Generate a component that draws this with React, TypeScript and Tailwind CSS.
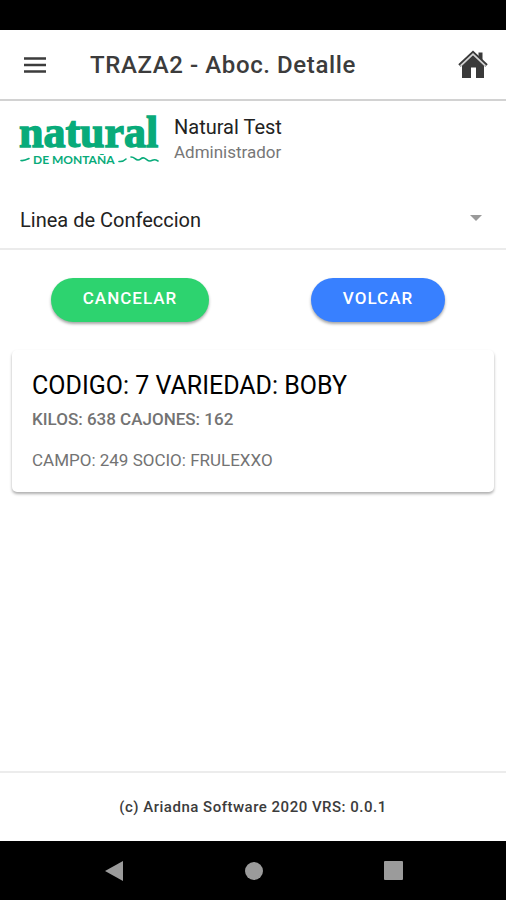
function MenuIcon() {
  return (
    <svg viewBox="0 0 24 20" className="h-5 w-6" fill="none" stroke="#3c3c3c" strokeWidth="2.6" aria-hidden="true">
      <path d="M1 3.5h22M1 10h22M1 16.5h22" />
    </svg>
  );
}

function HomeIcon() {
  return (
    <svg viewBox="0 0 30 30" className="size-[30px]" aria-hidden="true">
      <path d="M20.500 2.500h4v9l-4-4z" fill="#3a3a3a" />
      <path d="M4 15.500 15 5l11 10.500V28h-8V17.500h-5V28H4z" fill="#3a3a3a" />
      <path d="M1.500 15.500 15 3l13.500 12.500" fill="none" stroke="#3a3a3a" strokeWidth="3.600" />
      <path d="M2.500 15.900 15 4.200l12.500 11.700" fill="none" stroke="#d4d4d4" strokeWidth="1.700" />
    </svg>
  );
}

function Logo() {
  return (
    <svg viewBox="0 -8 144 66" className="h-[66px] w-36 shrink-0" fill="#08ab7a" role="img" aria-label="Natural de Montaña">
      <text x="1" y="36" fontFamily="'Liberation Serif', serif" fontWeight="700" fontSize="44" stroke="#08ab7a" strokeWidth="1.4">
        natural
      </text>
      <text x="15" y="53" fontFamily="Lato, sans-serif" fontWeight="700" fontSize="12">
        DE MONTAÑA
      </text>
      <g fill="none" stroke="#08ab7a" strokeWidth="1.600" strokeLinecap="round">
        <path d="M3 49.500q3 .5 8-2" />
        <path d="M101 50.500q4 .5 7-2.500" />
        <path d="M113 46c4 0 4 3 7 3s3-3 6-2 3 3 6 3 3-3 8 0" />
      </g>
    </svg>
  );
}

export default function App() {
  return (
    <div className="flex min-h-screen flex-col bg-white font-['Roboto',sans-serif] text-[#222]">
      <div className="h-[30px] bg-black" />
      <header className="flex h-[71px] items-center border-b-2 border-[#d2d2d2] pr-[18px] pl-[23px]">
        <button type="button" aria-label="Menú">
          <MenuIcon />
        </button>
        <h1 className="ml-[43px] flex-1 text-2xl font-medium tracking-wide text-[#3c3c3c]">TRAZA2 - Aboc. Detalle</h1>
        <a href="#inicio" aria-label="Inicio">
          <HomeIcon />
        </a>
      </header>

      <main className="flex-1">
        <section className="flex items-start gap-3 pt-[2px] pr-5 pl-[18px]">
          <Logo />
          <div className="pt-3">
            <p className="text-xl leading-6 text-[#222]">Natural Test</p>
            <p className="text-[17px] leading-[26px] text-[#777]">Administrador</p>
          </div>
        </section>

        <div className="relative mt-[22px] border-b-2 border-[#ebebeb]">
          <select
            aria-label="Linea"
            className="h-[57px] w-full appearance-none bg-transparent pr-12 pl-5 text-xl text-[#222]"
          >
            <option>Linea de Confeccion</option>
          </select>
          <svg viewBox="0 0 12 6" className="pointer-events-none absolute top-6 right-6 h-[6px] w-3" fill="#9a9a9a" aria-hidden="true">
            <path d="M0 0h12L6 6z" />
          </svg>
        </div>

        <div className="grid grid-cols-2 justify-items-center pt-7 pr-1 pl-1.5">
          <button
            type="button"
            className="h-11 rounded-full bg-[#2dd36f] px-8 pb-0.5 text-[17px] font-medium tracking-[1px] text-white shadow-[0_2px_3px_rgba(0,0,0,0.35)]"
          >
            CANCELAR
          </button>
          <button
            type="button"
            className="h-11 rounded-full bg-[#3880ff] px-8 pb-0.5 text-[17px] font-medium tracking-[1px] text-white shadow-[0_2px_3px_rgba(0,0,0,0.35)]"
          >
            VOLCAR
          </button>
        </div>

        <article className="mx-3 mt-7 rounded-[5px] px-5 pt-5 pb-5 shadow-[0_2px_3px_rgba(0,0,0,0.32)]">
          <h2 className="text-[25px] leading-8 text-black">CODIGO: 7 VARIEDAD: BOBY</h2>
          <p className="text-[17px] leading-[34px] font-medium text-[#737373]">KILOS: 638 CAJONES: 162</p>
          <p className="pt-3 text-[17px] leading-6 text-[#737373]">CAMPO: 249 SOCIO: FRULEXXO</p>
        </article>
      </main>

      <footer>
        <p className="flex h-[70px] items-center justify-center border-t-2 border-[#ececec] text-[15px] font-medium tracking-[0.5px] text-[#3c3c3c]">
          (c) Ariadna Software 2020 VRS: 0.0.1
        </p>
        <nav className="flex h-[59px] items-center justify-center gap-[121px] bg-black">
          <button type="button" aria-label="Atrás">
            <svg viewBox="0 0 20 20" className="size-5" fill="#9b9b9b" aria-hidden="true">
              <path d="M19 0v20L1 10z" />
            </svg>
          </button>
          <button type="button" aria-label="Pantalla de inicio" className="size-[18px] rounded-full bg-[#9b9b9b]" />
          <button type="button" aria-label="Recientes" className="size-[19px] rounded-[1px] bg-[#9b9b9b]" />
        </nav>
      </footer>
    </div>
  );
}
